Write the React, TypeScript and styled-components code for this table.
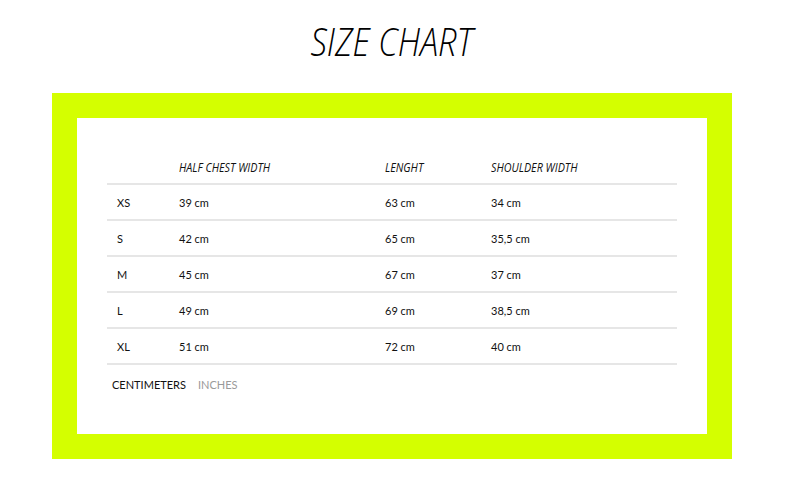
import styled, { createGlobalStyle } from "styled-components";

const GlobalStyle = createGlobalStyle`
  body {
    margin: 0;
    background: #ffffff;
    font-family: Lato, "Open Sans", sans-serif;
  }
`;

const Page = styled.div`
  width: 787px;
  height: 504px;
  display: flex;
  flex-direction: column;
  padding-left: 52px;
  box-sizing: border-box;
`;

const Title = styled.h1`
  margin: 18px 0 0;
  height: 75px;
  width: 680px;
  text-align: center;
  font-family: "Open Sans", sans-serif;
  font-style: italic;
  font-weight: 300;
  font-size: 39px;
  line-height: 46px;
  color: #000;
`;

// the original face is a narrow italic; squeeze a regular one to its width
const Narrow = styled.span<{ $x: number; $origin?: string }>`
  display: inline-block;
  transform: scaleX(${(p) => p.$x});
  transform-origin: ${(p) => p.$origin || "center"};
  white-space: nowrap;
`;

const Frame = styled.div`
  width: 680px;
  height: 366px;
  box-sizing: border-box;
  background: #d4ff00;
  padding: 25px;
`;

const Card = styled.div`
  background: #fff;
  height: 100%;
  box-sizing: border-box;
  padding: 33px 30px 0;
`;

const Table = styled.table`
  width: 570px;
  border-collapse: collapse;
  table-layout: fixed;
`;

const Head = styled.th<{ $w: number }>`
  width: ${(p) => p.$w - 20}px;
  text-align: left;
  padding: 0 10px;
  height: 32px;
  font-family: "Open Sans", sans-serif;
  font-style: italic;
  font-weight: 400;
  font-size: 12.5px;
  color: #111;
  border-bottom: 2px solid #e6e6e6;
`;

const Cell = styled.td`
  padding: 0 10px;
  height: 34px;
  font-size: 11px;
  color: #111;
  border-bottom: 2px solid #e6e6e6;
`;

const Units = styled.div`
  display: flex;
  gap: 12px;
  padding: 13px 0 0 5px;
  font-size: 11px;
`;

const Unit = styled.span<{ $active?: boolean }>`
  color: ${(p) => (p.$active ? "#111" : "#9a9a9a")};
`;

const columns = [
  { title: "", w: 62 },
  { title: "HALF CHEST WIDTH", w: 206 },
  { title: "LENGHT", w: 106 },
  { title: "SHOULDER WIDTH", w: 196 },
];

const rows = [
  ["XS", "39 cm", "63 cm", "34 cm"],
  ["S", "42 cm", "65 cm", "35,5 cm"],
  ["M", "45 cm", "67 cm", "37 cm"],
  ["L", "49 cm", "69 cm", "38,5 cm"],
  ["XL", "51 cm", "72 cm", "40 cm"],
];

export default function App() {
  return (
    <>
      <GlobalStyle />
      <Page>
        <Title>
          <Narrow $x={0.84}>SIZE CHART</Narrow>
        </Title>
        <Frame>
          <Card>
            <Table>
              <thead>
                <tr>
                  {columns.map((c, i) => (
                    <Head key={i} $w={c.w}>
                      <Narrow $x={0.86} $origin="left">
                        {c.title}
                      </Narrow>
                    </Head>
                  ))}
                </tr>
              </thead>
              <tbody>
                {rows.map((r, i) => (
                  <tr key={i}>
                    {r.map((v, j) => (
                      <Cell key={j}>{v}</Cell>
                    ))}
                  </tr>
                ))}
              </tbody>
            </Table>
            <Units>
              <Unit $active>CENTIMETERS</Unit>
              <Unit>INCHES</Unit>
            </Units>
          </Card>
        </Frame>
      </Page>
    </>
  );
}
